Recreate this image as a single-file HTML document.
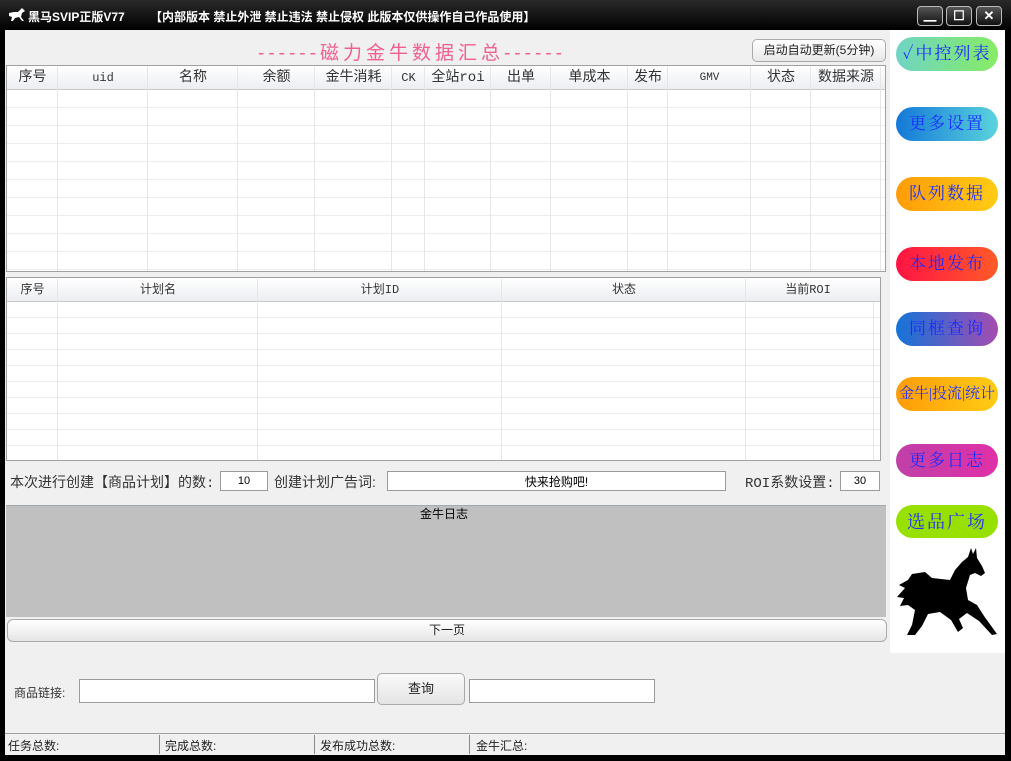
<!DOCTYPE html>
<html><head><meta charset="utf-8"><style>
*{margin:0;padding:0;box-sizing:border-box}
body{width:1011px;height:761px;background:#000;position:relative;overflow:hidden;font-family:"Liberation Sans","Noto Sans CJK SC",sans-serif;font-size:12px;color:#222}
.a{position:absolute}
.title{left:0;top:0;width:1011px;height:30px;background:linear-gradient(#2a2a2a,#000);color:#fff;font-weight:bold;font-size:12px}
.wb{top:6px;width:26px;height:20px;border:1px solid #bbb;border-radius:4px;background:linear-gradient(#555,#111);color:#fff;text-align:center;font-size:13px;line-height:17px}
.client{left:5px;top:30px;width:1000px;height:725px;background:#f0f0f0}
.tbl{background:#fff;border:1px solid #a0a0a0}
.hd{position:absolute;left:0;top:0;right:0;background:linear-gradient(#fff,#eceef2);border-bottom:1px solid #c8c8c8}
.hd span{position:absolute;top:0;text-align:center;color:#333;font-family:"Liberation Mono","Noto Sans CJK SC",monospace}
.vl{position:absolute;width:1px;background:#e6e6e6}
.btn{position:absolute;left:896px;width:102px;height:34px;border-radius:17px;color:#1a2cff;font-family:"Liberation Serif","Noto Serif CJK SC",serif;font-size:17px;text-align:center;line-height:34px;letter-spacing:2px}
input{position:absolute;background:#fff;border:1px solid #9a9a9a;font-size:11px;text-align:center;font-family:"Liberation Sans",sans-serif}
.lbl{position:absolute;font-size:13px;color:#333}
</style></head><body>
<div class="a title">
 <svg class="a" style="left:8px;top:8px" width="18" height="14" viewBox="0 0 18 14"><path d="M1 5 L6 4 L10 4 L13 1 L14 0 L17 3 L14 5 L13 9 L16 13 L14 13 L11 9 L7 10 L5 13 L3 13 L4 9 L1 8Z" fill="#fff"/></svg>
 <span class="a" style="left:28px;top:8px">黑马SVIP正版V77</span>
 <span class="a" style="left:150px;top:8px">【内部版本 禁止外泄 禁止违法 禁止侵权 此版本仅供操作自己作品使用】</span>
 <div class="a wb" style="left:917px">▁</div>
 <div class="a wb" style="left:946px">☐</div>
 <div class="a wb" style="left:976px">✕</div>
</div>
<div class="a client"></div>
<div class="a" style="left:890px;top:30px;width:115px;height:623px;background:#fff"></div>
<div class="a" style="left:258px;top:38px;font-size:19px;letter-spacing:4px;color:#f06090;white-space:nowrap">------磁力金牛数据汇总------</div>
<div class="a" style="left:752px;top:39px;width:134px;height:23px;border:1px solid #aaa;border-radius:5px;background:linear-gradient(#fff,#e8e8e8);font-size:12px;line-height:21px;text-align:center">启动自动更新(5分钟)</div>

<div class="a tbl" style="left:6px;top:65px;width:880px;height:207px;background-color:#fff;background-image:repeating-linear-gradient(#fff 0 17px,#ececec 17px 18px);background-position:0 24px"></div>
<div class="a" style="left:7px;top:66px;width:878px;height:24px">
 <div class="hd" style="height:24px;font-size:14px;line-height:24px">
 <span style="left:0;width:51px">序号</span><span style="left:51px;width:90px;font-size:12px">uid</span><span style="left:141px;width:90px">名称</span><span style="left:231px;width:77px">余额</span><span style="left:308px;width:77px">金牛消耗</span><span style="left:385px;width:33px;font-size:12px">CK</span><span style="left:418px;width:66px">全站roi</span><span style="left:484px;width:60px">出单</span><span style="left:544px;width:77px">单成本</span><span style="left:621px;width:40px">发布</span><span style="left:661px;width:83px;font-size:11px">GMV</span><span style="left:744px;width:60px">状态</span><span style="left:804px;width:70px">数据来源</span>
 </div></div>
<div class="vl" style="left:57px;top:67px;height:204px"></div><div class="vl" style="left:147px;top:67px;height:204px"></div><div class="vl" style="left:237px;top:67px;height:204px"></div><div class="vl" style="left:314px;top:67px;height:204px"></div><div class="vl" style="left:391px;top:67px;height:204px"></div><div class="vl" style="left:424px;top:67px;height:204px"></div><div class="vl" style="left:490px;top:67px;height:204px"></div><div class="vl" style="left:550px;top:67px;height:204px"></div><div class="vl" style="left:627px;top:67px;height:204px"></div><div class="vl" style="left:667px;top:67px;height:204px"></div><div class="vl" style="left:750px;top:67px;height:204px"></div><div class="vl" style="left:810px;top:67px;height:204px"></div><div class="vl" style="left:880px;top:67px;height:204px"></div>

<div class="a tbl" style="left:6px;top:277px;width:875px;height:184px;background-image:repeating-linear-gradient(#fff 0 15px,#ececec 15px 16px);background-position:0 24px"></div>
<div class="a" style="left:7px;top:278px;width:873px;height:24px">
 <div class="hd" style="height:24px;font-size:12px;line-height:24px">
 <span style="left:0;width:51px">序号</span><span style="left:51px;width:200px">计划名</span><span style="left:251px;width:244px">计划ID</span><span style="left:495px;width:244px">状态</span><span style="left:739px;width:124px">当前ROI</span>
 </div></div>
<div class="vl" style="left:57px;top:279px;height:181px"></div><div class="vl" style="left:257px;top:279px;height:181px"></div><div class="vl" style="left:501px;top:279px;height:181px"></div><div class="vl" style="left:745px;top:279px;height:181px"></div><div class="vl" style="left:873px;top:302px;height:158px"></div>

<div class="lbl" style="left:10px;top:472px;font-size:14px;font-family:'Liberation Mono','Noto Sans CJK SC',monospace">本次进行创建【商品计划】的数:</div>
<input style="left:220px;top:471px;width:48px;height:20px" value="10">
<div class="lbl" style="left:274px;top:472px;font-size:14px">创建计划广告词:</div>
<input style="left:387px;top:471px;width:339px;height:20px;font-size:12px" value="快来抢购吧!">
<div class="lbl" style="left:745px;top:472px;font-size:14px;font-family:'Liberation Mono','Noto Sans CJK SC',monospace">ROI系数设置:</div>
<input style="left:840px;top:471px;width:40px;height:20px" value="30">

<div class="a" style="left:6px;top:505px;width:880px;height:112px;background:#c0c0c0;border-top:1px solid #a0a8b0"></div>
<div class="a" style="left:420px;top:505px;font-size:12px;color:#000">金牛日志</div>
<div class="a" style="left:7px;top:619px;width:880px;height:23px;border:1px solid #aaa;border-radius:6px;background:linear-gradient(#fff,#e6e6e6);text-align:center;line-height:21px;font-size:12px">下一页</div>

<div class="lbl" style="left:14px;top:684px;font-size:12px">商品链接:</div>
<input style="left:79px;top:679px;width:296px;height:24px">
<div class="a" style="left:377px;top:673px;width:88px;height:32px;border:1px solid #aaa;border-radius:5px;background:linear-gradient(#fafafa,#e4e4e4);text-align:center;line-height:30px;font-size:13px">查询</div>
<input style="left:469px;top:679px;width:186px;height:24px">

<div class="a" style="left:5px;top:733px;width:1000px;height:1px;background:#a0a0a0"></div>
<div class="a" style="left:8px;top:737px;font-size:12px">任务总数:</div>
<div class="a" style="left:159px;top:735px;width:1px;height:19px;background:#888"></div>
<div class="a" style="left:165px;top:737px;font-size:12px">完成总数:</div>
<div class="a" style="left:314px;top:735px;width:1px;height:19px;background:#888"></div>
<div class="a" style="left:320px;top:737px;font-size:12px">发布成功总数:</div>
<div class="a" style="left:469px;top:735px;width:1px;height:19px;background:#888"></div>
<div class="a" style="left:476px;top:737px;font-size:12px">金牛汇总:</div>

<div class="btn" style="top:37px;background:linear-gradient(90deg,#6fd4c4,#86ec64)">✓中控列表</div>
<div class="btn" style="top:107px;background:linear-gradient(90deg,#1478d8,#5ad4dc)">更多设置</div>
<div class="btn" style="top:177px;background:linear-gradient(90deg,#ff9c08,#ffcc14)">队列数据</div>
<div class="btn" style="top:247px;background:linear-gradient(90deg,#ff1444,#ff5a28)">本地发布</div>
<div class="btn" style="top:312px;background:linear-gradient(90deg,#1474d8,#a44cb0)">同框查询</div>
<div class="btn" style="top:377px;background:linear-gradient(90deg,#ff9c08,#ffcc14);font-size:15px;letter-spacing:0;color:#1a2cff">金牛|投流|统计</div>
<div class="btn" style="top:444px;height:33px;background:linear-gradient(90deg,#c040a8,#e030a8)">更多日志</div>
<div class="btn" style="top:505px;height:33px;background:#98e000;color:#2030ff;font-size:18px">选品广场</div>
<svg class="a" style="left:890px;top:540px" width="115" height="105" viewBox="890 540 115 105">
<path d="M968 557 L971 548 L973 554 L976 548 L977 558 L982 566 L985 573 L981 576 L975 573 L970 575 L966 588 L968 600 L977 605 L984 616 L997 634 L992 635 L979 621 L967 613 L959 619 L963 628 L958 632 L951 620 L940 612 L928 614 L922 626 L915 635 L907 635 L912 625 L915 610 L908 605 L900 606 L904 598 L897 597 L905 588 L899 585 L908 580 L912 574 L925 572 L932 578 L950 580 L955 570 L962 562Z" fill="#000"/>
</svg>
</body></html>
